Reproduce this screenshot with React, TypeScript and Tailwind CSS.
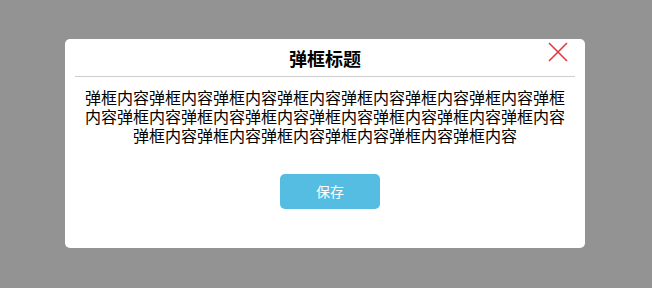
export default function App() {
  const content = "弹框内容".repeat(21);

  return (
    <div
      className="h-[288px] w-full bg-[#939393] flex items-center justify-center"
      style={{ fontFamily: '"Noto Sans CJK SC", "Liberation Sans", sans-serif' }}
    >
      <div className="w-[520px] h-[209px] mr-[2px] mb-[1px] bg-white rounded-[5px] flex flex-col">
        {/* Header */}
        <div className="relative h-[38px] mx-[10px] border-b border-[#cfcfcf] flex items-center justify-center">
          <h2 className="text-[18px] font-bold text-black leading-none">弹框标题</h2>
          <button className="absolute right-[7px] top-[3px] w-[20px] h-[20px]">
            <svg width="20" height="20" viewBox="0 0 20 20">
              <path d="M1 1 L19 19 M19 1 L1 19" stroke="#e0393e" strokeWidth="1.6" fill="none" />
            </svg>
          </button>
        </div>

        {/* Body */}
        <div className="px-5 pt-[11px] text-center text-[16px] leading-[19px] text-black break-all">
          {content}
        </div>

        {/* Footer */}
        <div className="flex justify-center mt-[29px] pl-[10px]">
          <button className="w-[100px] h-[35px] rounded-[5px] bg-[#54bde1] text-white text-[14px]">
            保存
          </button>
        </div>
      </div>
    </div>
  );
}
